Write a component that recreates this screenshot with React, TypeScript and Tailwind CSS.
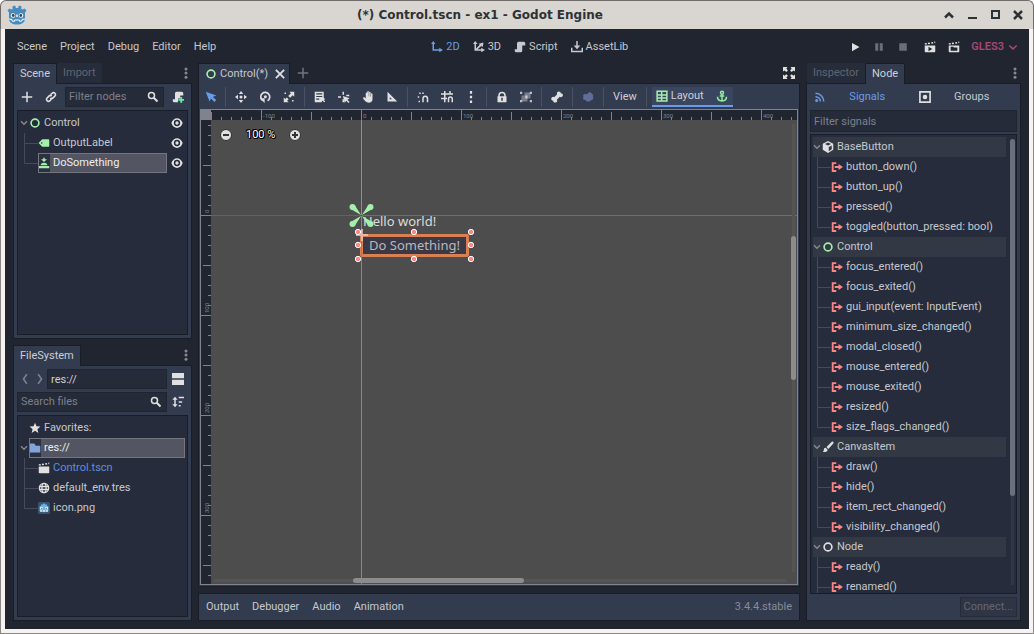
import { useState, type ReactNode } from "react";

const MENUS = ["Scene", "Project", "Debug", "Editor", "Help"];

const SIGNAL_GROUPS = [
  {
    name: "BaseButton",
    icon: "cube",
    signals: ["button_down()", "button_up()", "pressed()", "toggled(button_pressed: bool)"],
  },
  {
    name: "Control",
    icon: "ringGreen",
    signals: [
      "focus_entered()",
      "focus_exited()",
      "gui_input(event: InputEvent)",
      "minimum_size_changed()",
      "modal_closed()",
      "mouse_entered()",
      "mouse_exited()",
      "resized()",
      "size_flags_changed()",
    ],
  },
  {
    name: "CanvasItem",
    icon: "brush",
    signals: ["draw()", "hide()", "item_rect_changed()", "visibility_changed()"],
  },
  {
    name: "Node",
    icon: "ring",
    signals: ["ready()", "renamed()"],
    more: true,
  },
];

// All drawn on a 16x16 grid
const ICONS: Record<string, ReactNode> = {
  ring: <circle cx="8" cy="8" r="5.2" fill="none" stroke="currentColor" strokeWidth="2.2" />,
  ringGreen: <circle cx="8" cy="8" r="5.2" fill="none" stroke="#a5efac" strokeWidth="2.2" />,
  label: (
    <path
      fill="#a5efac"
      fillRule="evenodd"
      d="M6 3a1 1 0 0 0-.7.3l-4 4a1 1 0 0 0 0 1.4l4 4a1 1 0 0 0 .7.3h8a1 1 0 0 0 1-1V4a1 1 0 0 0-1-1zM5 7a1 1 0 0 1 0 2 1 1 0 0 1 0-2z"
    />
  ),
  button: (
    <path fill="#a5efac" d="M7 1h2v2h3L8 6.500 4 3h3zM3.500 11C3.500 8.500 6 7.500 8 7.500s4.500 1 4.500 3.500zM1 12h14v3H1z" />
  ),
  eye: (
    <path
      fillRule="evenodd"
      d="M8 1.500C5.200 1.500 1.700 3.600.6 7.700a1 1 0 0 0 0 .6C1.700 12.400 5.200 14.500 8 14.500s6.300-2.100 7.400-6.200a1 1 0 0 0 0-.6C14.300 3.600 10.800 1.500 8 1.500zm0 2.300a4.200 4.200 0 0 1 0 8.400 4.200 4.200 0 0 1 0-8.400zm0 2a2.200 2.200 0 0 0 0 4.400 2.200 2.200 0 0 0 0-4.400z"
    />
  ),
  plus: <path d="M7 1h2v6h6v2H9v6H7V9H1V7h6z" />,
  link: (
    <g fill="none" stroke="currentColor" strokeWidth="2.200">
      <path d="M7.500 5l2-2a2.500 2.500 0 0 1 3.700 3.700l-2.500 2.500a2.500 2.500 0 0 1-3.500 0" />
      <path d="M8.500 11l-2 2a2.500 2.500 0 0 1-3.700-3.700l2.500-2.500a2.500 2.500 0 0 1 3.500 0" />
    </g>
  ),
  search: (
    <g fill="none" stroke="currentColor">
      <circle cx="6" cy="6" r="4" strokeWidth="2" />
      <path d="M9 9l5 5" strokeWidth="2.500" />
    </g>
  ),
  script: <path d="M6 1a2 2 0 0 0-2 2v8H1v2a2 2 0 0 0 2 2h6a2 2 0 0 0 2-2V6h4V3a2 2 0 0 0-2-2z" />,
  scriptAdd: (
    <>
      <path d="M6 1a2 2 0 0 0-2 2v8H1v2a2 2 0 0 0 2 2h5v-5h3V6h4V3a2 2 0 0 0-2-2z" />
      <path fill="#60efa0" d="M11 8h2.500v2.500H16V13h-2.500v2.500H11V13H8.500v-2.500H11z" />
    </>
  ),
  star: <path d="M8 1l2 4.700 5.200.4-4 3.400 1.300 5L8 11.800l-4.500 2.700 1.300-5-4-3.400L6 5.700z" />,
  folder: <path fill="#84a3dc" d="M1 2h6l2 3h6v9H1z" />,
  clapper: (
    <>
      <path d="M1 6h14v8a1 1 0 0 1-1 1H2a1 1 0 0 1-1-1z" />
      <path d="M1 3l2.500-.4.500 2H1zM5 2.300l2.500-.4.600 2-2.600.5zM9.500 1.600l2.300-.4.600 2-2.400.4zM13.500 1l1.500-.2v2l-1 .2z" />
    </>
  ),
  playScene: (
    <>
      <path fillRule="evenodd" d="M1 6h14v8a1 1 0 0 1-1 1H2a1 1 0 0 1-1-1zm5 1.500v6l5-3z" />
      <path d="M1 3l2.500-.4.500 2H1zM5 2.300l2.500-.4.600 2-2.600.5zM9.500 1.600l2.300-.4.600 2-2.400.4zM13.500 1l1.500-.2v2l-1 .2z" />
    </>
  ),
  playCustom: (
    <>
      <path fillRule="evenodd" d="M1 6h14v8a1 1 0 0 1-1 1H2a1 1 0 0 1-1-1zm2.500 1.500v5.500h9V8.500H8l-1-1z" />
      <path d="M1 3l2.500-.4.500 2H1zM5 2.300l2.500-.4.600 2-2.600.5zM9.500 1.600l2.300-.4.600 2-2.400.4zM13.500 1l1.500-.2v2l-1 .2z" />
    </>
  ),
  globe: (
    <g fill="none" stroke="currentColor" strokeWidth="1.800">
      <circle cx="8" cy="8" r="6.200" />
      <ellipse cx="8" cy="8" rx="2.800" ry="6.200" />
      <path d="M2 6h12M2 10h12" />
    </g>
  ),
  godotSmall: (
    <>
      <rect width="16" height="16" rx="2" fill="#355570" />
      <path fill="#6fb0dd" d="M2 6l2-1V3l2 .5L7 2h2l1 1.500 2-.5v2l2 1v6c-2 2-10 2-12 0z" />
      <path fill="#fff" d="M3 6.500h3.500v3H3zM9.500 6.500H13v3H9.500zM3 11h2v2H3zM7 11h2v2H7zM11 11h2v2h-2z" />
      <path fill="#35608a" d="M4 7.500h2v1.500H4zM10 7.500h2v1.500h-2z" />
    </>
  ),
  split: <path d="M0 0h16v7H0zM0 9h16v7H0z" />,
  sort: (
    <path d="M4 1l3.500 4H5v6h2.500L4 15 .5 11H3V5H.5zM9 1h7v2H9zM9 7h4.500v2H9zM9 12h2.500v2H9z" />
  ),
  two: <path d="M3 0l3 4H4v7h7V9l5 3-5 3v-2H2V4H0z" />,
  three: <path d="M3 0l3 4H4v6l5-5-1.500-1.500L14 2l-1 6-2-1.500L6 11h5V9l5 3-5 3v-2H2V4H0z" />,
  asset: <path d="M7 0h2v6h3.500L8 11 3.500 6H7zM0 9h2v4h12V9h2v6H0z" />,
  play: <path d="M4 2.500v11L14 8z" />,
  pause: <path d="M3 3h4v10H3zM9 3h4v10H9z" />,
  stop: <path d="M3 3h10v10H3z" />,
  select: <path fill="#699ce8" d="M1 1l5 13 2-4 4.500 4.500L15 12l-4.500-4L15 6z" />,
  move: (
    <path d="M8 0l3 4H5zM8 16l3-4H5zM0 8l4-3v6zM16 8l-4-3v6zM8 6a2 2 0 0 0 0 4 2 2 0 0 0 0-4z" />
  ),
  rotate: (
    <>
      <path d="M4.500 12.500A6 6 0 1 1 11.500 13" fill="none" stroke="currentColor" strokeWidth="2.200" />
      <path d="M1 9.500h6.500V16z" />
      <circle cx="8.500" cy="7.500" r="2" />
    </>
  ),
  scale: (
    <path d="M8.500 1H15v6.500L13 5.500l-3.500 3.500-2.500-2.500L10.500 3zM7.500 15H1V8.500l2 2L5 8.500 7.500 11l-2 2zM2 2h2v2H2zM12 12h2v2h-2z" />
  ),
  list: (
    <path
      fillRule="evenodd"
      d="M1 1h12v8l2 2-2 1 2 2-1 1-3-2-1 2H1zM3 3v1.500h8V3zM3 6.500V8h8V6.500zM3 10v1.500h4V10z"
    />
  ),
  pivot: <path d="M6 1h2v4H6zM0 7h4v2H0zM6 11h2v4H6zM11 5h4v2h-4zM6.500 6.500l9 3-3 2 3 3-1.500 1.500-3-3-2 3z" />,
  hand: (
    <path d="M7 1a1 1 0 0 1 2 0v6h.5V2a1 1 0 0 1 2 0v5.500h.5V4a1 1 0 0 1 2 0v7c0 3-2 4.500-5 4.500-3.500 0-5-2-7.500-5.500C1 8.500 3 8 4 9l1 1V3a1 1 0 0 1 2 0z" />
  ),
  ruler: <path fillRule="evenodd" d="M2 1l13 13H2zm3 7v3h3z" />,
  magnet: (
    <path d="M3 2h2v2H3zM7 2h2v2H7zM1 7h2v2H1zM7 15v-5a4 4 0 0 1 8 0v5h-2v-5a2 2 0 0 0-4 0v5zM2 13h2v2H2z" />
  ),
  gridMagnet: (
    <path d="M4 0h2v3h5V0h2v3h3v2H6v4h2v2H6v4H4v-4H0V9h4V5H0V3h4zM9 15v-4.500a3.500 3.500 0 0 1 7 0V15h-2v-4.500a1.500 1.500 0 0 0-3 0V15z" />
  ),
  dots: <path d="M6.500 0h3v3.500h-3zM6.500 6.250h3v3.500h-3zM6.500 12.500h3V16h-3z" />,
  lock: (
    <path
      fillRule="evenodd"
      d="M8 1a5 5 0 0 0-5 5v1H2v8h12V7h-1V6a5 5 0 0 0-5-5zm0 2a3 3 0 0 1 3 3v1H5V6a3 3 0 0 1 3-3zM7 9h2v4H7z"
    />
  ),
  group: (
    <>
      <path opacity=".4" d="M6 2h8v8H6zM2 6h8v8H2z" />
      <path d="M0 1h3v3H0zM13 1h3v3h-3zM0 12h3v3H0zM13 12h3v3h-3zM7 6h3v4H7z" opacity=".8" />
    </>
  ),
  bone: (
    <path d="M10.500.5a2.600 2.600 0 0 0-2.300 3.700L4.300 8.200A2.600 2.600 0 1 0 2.900 13a2.600 2.600 0 1 0 4.900-1.400l3.900-3.900A2.600 2.600 0 1 0 13.100 3a2.600 2.600 0 0 0-2.600-2.500z" />
  ),
  blob: (
    <path
      fill="#5f6d98"
      d="M7 4.500a3.200 3.200 0 0 1 6-1c2 .5 2.500 2.500 1.500 3.500 1.500 2 0 5.500-2.500 5l-1 2H6l-1-2c-3.500.5-4.500-2-3-4-1.500-2 0-5 5-3.500z"
    />
  ),
  layout: (
    <path fill="none" stroke="#a5efac" strokeWidth="2" d="M1.500 1.500h13v13h-13zM1.500 6.500h13M1.500 10.500h13M7.500 2v12" />
  ),
  anchor: (
    <g fill="none" stroke="#8eef97" strokeWidth="2">
      <circle cx="8" cy="3.500" r="2" />
      <path d="M8 6v8M5 8h6M2 9c0 4 3 5.500 6 5.500s6-1.500 6-5.500" />
    </g>
  ),
  expand: (
    <path d="M0 0h6L4.500 2 6.500 4.500 4.500 6.500 2 4.500 0 6zM16 0h-6l1.500 2-2 2.500 2 2 2.500-2L16 6zM0 16h6l-1.500-2 2-2.500-2-2-2.500 2L0 10zM16 16h-6l1.500-2-2-2.500 2-2 2.500 2 2-1.500z" />
  ),
  close: <path d="M2.500 2.500l11 11M13.500 2.500l-11 11" stroke="currentColor" strokeWidth="2.500" />,
  signals: (
    <g fill="none" stroke="currentColor" strokeWidth="2">
      <path d="M2 3a11 11 0 0 1 11 11M2 7.500A6.500 6.500 0 0 1 8.500 14" />
      <circle cx="3.500" cy="12.500" r="1" />
    </g>
  ),
  groups: (
    <>
      <path fill="none" stroke="currentColor" strokeWidth="2.200" d="M1.200 1.200h13.600v13.600H1.200z" />
      <circle cx="8" cy="8" r="3" />
    </>
  ),
  cube: (
    <path fillRule="evenodd" d="M8 0l7 3.500v8L8 16l-7-4.500v-8zM8 2L4 4l4 2 4-2zM9 8v5.500l4-2.500V6z" />
  ),
  brush: (
    <path d="M15 1c-1-.6-2 0-3 1L6 8l2.500 2.500 6-6.500c1-1 1.200-2.400.5-3zM5 9c-2 0-2.500 1-2.500 2.500 0 1-.5 2-1.500 3 3 .5 6.500 0 6.500-3z" />
  ),
  signal: <path fill="#ff8484" d="M1 1.500h6V4H3.500v8H7v2.500H1zM5 6.800h5V4l6 4-6 4V9.200H5z" />,
  down: <path d="M3 6l5 4.500L13 6" fill="none" stroke="currentColor" strokeWidth="2" />,
  fold: <path d="M2 4.500l6 6 6-6" fill="none" stroke="currentColor" strokeWidth="2.800" />,
  left: <path d="M10.500 1.500L6 8l4.500 6.500" fill="none" stroke="currentColor" strokeWidth="2.200" />,
  right: <path d="M5.500 1.500L10 8l-4.500 6.500" fill="none" stroke="currentColor" strokeWidth="2.200" />,
  kebab: (
    <>
      <circle cx="8" cy="2.500" r="2" />
      <circle cx="8" cy="8" r="2" />
      <circle cx="8" cy="13.500" r="2" />
    </>
  ),
};

function Icon({ name, className = "size-3" }: { name: string; className?: string }) {
  return (
    <svg viewBox="0 0 16 16" fill="currentColor" aria-hidden="true" className={`shrink-0 ${className}`}>
      {ICONS[name]}
    </svg>
  );
}

function GodotLogo() {
  return (
    <svg viewBox="0 0 20 20" className="size-5" aria-hidden="true">
      <path
        fill="#478cbf"
        d="M8 .5l-2.600 1L5.700 4l-1.200.6-2-1.200L.5 5.500 2 7.500v6.200C2 17.500 5.500 19.500 10 19.500s8-2 8-5.800V7.500l1.500-2-2-2.100-2 1.200L14.300 4l.3-2.500L12 .5 11 3H9z"
      />
      <circle cx="6" cy="10.500" r="2.200" fill="#fff" />
      <circle cx="14" cy="10.500" r="2.200" fill="#fff" />
      <circle cx="6.200" cy="10.500" r="1.400" fill="#414042" />
      <circle cx="13.800" cy="10.500" r="1.400" fill="#414042" />
      <path d="M10 9.500v2.500" stroke="#fff" strokeWidth="1.400" />
      <path d="M2 14l3 .5V16l2.500.3V15h5v1.300l2.500-.3v-1.500l3-.5" fill="none" stroke="#fff" strokeWidth="1" />
    </svg>
  );
}

function TitleBar() {
  return (
    <header className="flex h-[29px] shrink-0 items-center rounded-t-md border border-b-0 border-[#6f6b69] bg-[#d9d5d1] pr-1 pl-1.5 text-[#2d3236]">
      <GodotLogo />
      <h1 className="flex-1 pr-1 text-center font-['DejaVu_Sans','Liberation_Sans',sans-serif] text-[12px] font-bold">
        (*) Control.tscn - ex1 - Godot Engine
      </h1>
      <div className="flex">
        <button aria-label="Shade" className="flex w-[23px] justify-center">
          <svg viewBox="0 0 12 12" className="size-3" fill="none" stroke="currentColor" strokeWidth="2.500">
            <path d="M2 8.500l4-4 4 4" />
          </svg>
        </button>
        <button aria-label="Minimize" className="flex w-[23px] justify-center">
          <svg viewBox="0 0 12 12" className="size-3" fill="currentColor">
            <path d="M2 8h9v2H2z" />
          </svg>
        </button>
        <button aria-label="Maximize" className="flex w-[23px] justify-center">
          <svg viewBox="0 0 12 12" className="size-3" fill="none" stroke="currentColor" strokeWidth="2">
            <path d="M3 2h7v7H3z" />
          </svg>
        </button>
        <button aria-label="Close" className="flex w-[23px] justify-center">
          <svg viewBox="0 0 12 12" className="size-3" fill="none" stroke="currentColor" strokeWidth="2.500">
            <path d="M2 2l8 8M10 2l-8 8" />
          </svg>
        </button>
      </div>
    </header>
  );
}

function MenuBar() {
  return (
    <div className="flex h-[34px] shrink-0 items-center justify-between pt-0.5 pr-0.5 pl-1">
      <nav className="flex gap-[13px]">
        {MENUS.map((m) => (
          <button key={m}>{m}</button>
        ))}
      </nav>
      <div className="flex gap-[13px]">
        <button className="flex items-center gap-[3px] text-[#699ce8]">
          <Icon name="two" />
          2D
        </button>
        <button className="flex items-center gap-[3px]">
          <Icon name="three" />
          3D
        </button>
        <button className="flex items-center gap-[3px]">
          <Icon name="script" />
          Script
        </button>
        <button className="flex items-center gap-[3px]">
          <Icon name="asset" />
          AssetLib
        </button>
      </div>
      <div className="flex items-center text-[#e0e0e0]">
        <button aria-label="Play" className="flex w-6 justify-center">
          <Icon name="play" />
        </button>
        <button aria-label="Pause" className="flex w-6 justify-center text-[#6b6e76]">
          <Icon name="pause" />
        </button>
        <button aria-label="Stop" className="flex w-6 justify-center text-[#6b6e76]">
          <Icon name="stop" />
        </button>
        <button aria-label="Play scene" className="flex w-[29px] justify-center">
          <Icon name="playScene" />
        </button>
        <button aria-label="Play custom scene" className="mr-[7px] flex w-5 justify-center">
          <Icon name="playCustom" />
        </button>
        <button className="flex items-center gap-[3px] font-semibold text-[#a5487a]">
          GLES3
          <Icon name="down" />
        </button>
      </div>
    </div>
  );
}

function Tab({ active, children }: { active?: boolean; children: ReactNode }) {
  return (
    <button
      className={
        active
          ? "relative z-10 flex h-[21px] items-center gap-[3px] border border-b-0 border-[#191d27] bg-[#333b4f] px-1.5 text-[#cdcfd2]"
          : "flex h-5 items-center bg-[#272c3a] px-1.5 text-[#5f6471]"
      }
    >
      {children}
    </button>
  );
}

function Kebab({ label }: { label: string }) {
  return (
    <button aria-label={label} className="ml-auto flex h-5 w-3 items-center justify-center text-[#868992]">
      <Icon name="kebab" />
    </button>
  );
}

// Connecting line between a parent row and its child
function Branch({ last }: { last?: boolean }) {
  return (
    <svg viewBox="0 0 14 20" className="h-5 w-3.5 shrink-0" fill="none" stroke="#454b5b" aria-hidden="true">
      <path d={last ? "M.5 0V10.500H14" : "M.5 0V20M.5 10.500H14"} />
    </svg>
  );
}

function NodeRow({ icon, name, selected, last }: { icon: string; name: string; selected?: boolean; last?: boolean }) {
  return (
    <li className="flex h-5 items-center pl-1.5">
      <Branch last={last} />
      <div
        className={
          selected
            ? "flex h-5 flex-1 items-center bg-[#535662] text-[#eeeeee] outline -outline-offset-1 outline-[#73767f]"
            : "flex h-5 flex-1 items-center"
        }
      >
        <span className={selected ? "flex h-5 items-center bg-[#2c3140]" : "flex"}>
          <Icon name={icon} />
        </span>
        <span className="pl-[3px]">{name}</span>
      </div>
      <button aria-label={`Toggle ${name}`} className="mr-px flex w-[19px] justify-center text-[#e0e0e0]">
        <Icon name="eye" />
      </button>
    </li>
  );
}

function FileRow({ icon, name, last, open }: { icon: string; name: string; last?: boolean; open?: boolean }) {
  return (
    <li className="flex h-5 items-center pl-1.5">
      <Branch last={last} />
      <Icon name={icon} className="size-3 text-[#e0e0e0]" />
      <span className={open ? "pl-[3px] text-[#5f8ddb]" : "pl-[3px]"}>{name}</span>
    </li>
  );
}

function SceneDock() {
  const [filter, setFilter] = useState("");
  return (
    <section className="flex min-h-0 flex-1 flex-col">
      <div className="flex h-5 shrink-0">
        <Tab active>Scene</Tab>
        <Tab>Import</Tab>
        <Kebab label="Scene dock options" />
      </div>
      <div className="flex min-h-0 flex-1 flex-col gap-[3px] border border-[#191d27] bg-[#333b4f] p-[3px]">
        <div className="flex h-5 shrink-0 items-center gap-1 text-[#e0e0e0]">
          <button aria-label="Add node" className="flex w-5 justify-center">
            <Icon name="plus" />
          </button>
          <button aria-label="Instance scene" className="flex w-5 justify-center">
            <Icon name="link" />
          </button>
          <div className="flex h-5 min-w-0 flex-1 items-center border border-[#202430] bg-[#262b39] pr-1 pl-[3px]">
            <input
              aria-label="Filter nodes"
              placeholder="Filter nodes"
              value={filter}
              onChange={(e) => setFilter(e.target.value)}
              className="min-w-0 flex-1 outline-none placeholder:text-[#7c808b]"
            />
            <Icon name="search" />
          </div>
          <button aria-label="Attach script" className="flex w-5 justify-center">
            <Icon name="scriptAdd" />
          </button>
        </div>
        <ul className="min-h-0 flex-1 overflow-hidden border border-[#191d27] bg-[#262c3b] pt-0.5">
          <li className="flex h-5 items-center">
            <Icon name="fold" className="mr-px ml-0.5 size-2 text-[#868992]" />
            <Icon name="ringGreen" />
            <span className="flex-1 pl-[3px]">Control</span>
            <button aria-label="Toggle Control" className="mr-px flex w-[19px] justify-center text-[#e0e0e0]">
              <Icon name="eye" />
            </button>
          </li>
          <NodeRow icon="label" name="OutputLabel" />
          <NodeRow icon="button" name="DoSomething" selected last />
        </ul>
      </div>
    </section>
  );
}

function FileSystemDock() {
  const [path, setPath] = useState("res://");
  const [search, setSearch] = useState("");
  return (
    <section className="flex min-h-0 flex-1 flex-col">
      <div className="flex h-5 shrink-0">
        <Tab active>FileSystem</Tab>
        <Kebab label="FileSystem dock options" />
      </div>
      <div className="flex min-h-0 flex-1 flex-col gap-[3px] border border-[#191d27] bg-[#333b4f] p-[3px]">
        <div className="flex h-5 shrink-0 items-center text-[#e0e0e0]">
          <button aria-label="Back" className="flex w-[15px] justify-center text-[#7d818c]">
            <Icon name="left" />
          </button>
          <button aria-label="Forward" className="flex w-[15px] justify-center text-[#7d818c]">
            <Icon name="right" />
          </button>
          <input
            aria-label="Path"
            value={path}
            onChange={(e) => setPath(e.target.value)}
            className="h-5 min-w-0 flex-1 border border-[#202430] bg-[#262b39] px-[3px] text-[#cdcfd2] outline-none"
          />
          <button aria-label="Toggle split mode" className="flex w-[21px] justify-center">
            <Icon name="split" />
          </button>
        </div>
        <div className="flex h-5 shrink-0 items-center text-[#e0e0e0]">
          <div className="flex h-5 min-w-0 flex-1 items-center border border-[#202430] bg-[#262b39] pr-1 pl-[3px]">
            <input
              aria-label="Search files"
              placeholder="Search files"
              value={search}
              onChange={(e) => setSearch(e.target.value)}
              className="min-w-0 flex-1 outline-none placeholder:text-[#7c808b]"
            />
            <Icon name="search" />
          </div>
          <button aria-label="Sort files" className="flex w-[21px] justify-center">
            <Icon name="sort" />
          </button>
        </div>
        <ul className="min-h-0 flex-1 overflow-hidden border border-[#191d27] bg-[#262c3b] pt-0.5">
          <li className="flex h-5 items-center pl-[11px]">
            <Icon name="star" className="size-3 text-[#e0e0e0]" />
            <span className="pl-[3px]">Favorites:</span>
          </li>
          <li className="flex h-5 items-center pr-0.5">
            <Icon name="fold" className="mr-px ml-0.5 size-2 text-[#868992]" />
            <div className="flex h-5 flex-1 items-center bg-[#535662] text-[#eeeeee] outline -outline-offset-1 outline-[#73767f]">
              <span className="flex h-5 items-center bg-[#2c3140]">
                <Icon name="folder" />
              </span>
              <span className="pl-[3px]">res://</span>
            </div>
          </li>
          <FileRow icon="clapper" name="Control.tscn" open />
          <FileRow icon="globe" name="default_env.tres" />
          <FileRow icon="godotSmall" name="icon.png" last />
        </ul>
      </div>
    </section>
  );
}

function Separator() {
  return <span className="mx-[3px] h-5 w-px bg-[#4a5162]" />;
}

function Tool({ icon, label }: { icon: string; label: string }) {
  return (
    <button aria-label={label} className="flex h-5 w-6 items-center justify-center">
      <Icon name={icon} />
    </button>
  );
}

function CanvasToolbar() {
  return (
    <div className="flex h-[25px] shrink-0 items-center text-[#e0e0e0]">
      <button aria-label="Select mode" className="flex h-5 w-[23px] items-center justify-center">
        <Icon name="select" />
      </button>
      <Separator />
      <Tool icon="move" label="Move mode" />
      <Tool icon="rotate" label="Rotate mode" />
      <Tool icon="scale" label="Scale mode" />
      <Separator />
      <Tool icon="list" label="List select" />
      <Tool icon="pivot" label="Change pivot" />
      <Tool icon="hand" label="Pan mode" />
      <Tool icon="ruler" label="Ruler mode" />
      <Separator />
      <Tool icon="magnet" label="Smart snap" />
      <Tool icon="gridMagnet" label="Grid snap" />
      <Tool icon="dots" label="Snapping options" />
      <Separator />
      <Tool icon="lock" label="Lock" />
      <Tool icon="group" label="Group" />
      <Separator />
      <Tool icon="bone" label="Skeleton options" />
      <Separator />
      <Tool icon="blob" label="Override camera" />
      <Separator />
      <button className="px-1.5 text-[#cdcfd2]">View</button>
      <Separator />
      <div className="ml-0.5 flex h-5 items-center border-b-2 border-[#699ce8] bg-[#3a4660] pr-[5px] pl-1 text-[#cdcfd2]">
        <button className="flex items-center gap-[3px]">
          <Icon name="layout" />
          Layout
        </button>
        <button aria-label="Anchor mode" className="ml-3">
          <Icon name="anchor" />
        </button>
      </div>
    </div>
  );
}

const TICKS = Array.from({ length: 240 }, (_, i) => (i - 15) * 10);
const TOP_LABELS = [-100, 0, 100, 200, 300, 400];
const SIDE_LABELS = [0, 100, 200, 300];

function tickStart(v: number) {
  if (v % 100 === 0) return 0;
  return v % 50 === 0 ? 2 : 7;
}

function TopRuler() {
  return (
    <svg className="h-2.5 w-full bg-[#21252f]" aria-hidden="true">
      {TICKS.map((v) => (
        <path key={v} d={`M${v + 150.5} ${tickStart(v)}V10`} stroke="#80838d" />
      ))}
      {TOP_LABELS.map((v) => (
        <text key={v} x={v + 152} y="8" fontSize="6" fill="#80838d">
          {v}
        </text>
      ))}
    </svg>
  );
}

function SideRuler() {
  return (
    <svg className="h-full w-2.5 bg-[#21252f]" aria-hidden="true">
      {TICKS.map((v) => (
        <path key={v} d={`M${tickStart(v)} ${v + 95.5}H10`} stroke="#80838d" />
      ))}
      {SIDE_LABELS.map((v) => (
        <text key={v} transform={`translate(8 ${v + 93}) rotate(-90)`} fontSize="6" fill="#80838d">
          {v}
        </text>
      ))}
    </svg>
  );
}

const HANDLES = [
  [147, 112],
  [203, 112],
  [260, 112],
  [147, 125],
  [260, 125],
  [147, 139],
  [203, 139],
  [260, 139],
];

function Viewport() {
  return (
    <div className="relative min-h-0 min-w-0 overflow-hidden bg-[#4d4d4d]">
      <span className="absolute top-[92px] left-[152px] font-['Noto_Sans','Open_Sans',sans-serif] text-[13px] leading-[18px] text-[#dcdcdc]">
        Hello world!
      </span>
      <button className="absolute top-[114px] left-[149px] h-[23px] w-[109px] rounded-[2px] border-[3px] border-[#d97f51] bg-[#3b3945] pb-px font-['Noto_Sans','Open_Sans',sans-serif] text-[13px] leading-[16px] text-[#b9b8bd]">
        Do Something!
      </button>

      {/* axes, anchors and resize handles */}
      <svg className="absolute inset-0 size-full" aria-hidden="true">
        <path d="M150.500 0V95" stroke="#79b312" />
        <path d="M150.500 96V2000" stroke="#71957a" />
        <path d="M0 95.500H150" stroke="#b63a54" />
        <path d="M151 95.500H4000" stroke="#9b4f9b" />
        <g fill="#a5efac">
          <path d="M150 95L140 89.300 144 85.500z" />
          <path d="M151 95L161 89.300 157 85.500z" />
          <path d="M150 96L140 101.700 144 105.500z" />
          <path d="M151 96L161 101.700 157 105.500z" />
          <circle cx="141.500" cy="87" r="3" />
          <circle cx="159.500" cy="87" r="3" />
          <circle cx="141.500" cy="104" r="3" />
          <circle cx="159.500" cy="104" r="3" />
        </g>
        <path d="M150 109h2v5h5v2h-5v5h-2v-5h-5v-2h5z" fill="#f0c4bc" opacity=".8" />
        {HANDLES.map(([x, y]) => (
          <circle key={`${x}-${y}`} cx={x} cy={y} r="2.700" fill="#ff8484" stroke="#fff" strokeWidth="1" />
        ))}
      </svg>

      <div className="absolute top-[7px] left-2 flex items-center gap-[13px] text-[#e0e0e0]">
        <button aria-label="Zoom out">
          <svg viewBox="0 0 14 14" className="size-3.5">
            <circle cx="7" cy="7" r="5.500" fill="#e0e0e0" stroke="#333" />
            <path d="M4 7h6" stroke="#333" strokeWidth="2" />
          </svg>
        </button>
        <button className="text-white [text-shadow:1px_0_#000,-1px_0_#000,0_1px_#000,0_-1px_#000,1px_1px_#000,-1px_-1px_#000]">
          100 %
        </button>
        <button aria-label="Zoom in">
          <svg viewBox="0 0 14 14" className="size-3.5">
            <circle cx="7" cy="7" r="5.500" fill="#e0e0e0" stroke="#333" />
            <path d="M4 7h6M7 4v6" stroke="#333" strokeWidth="2" />
          </svg>
        </button>
      </div>

      <div className="absolute top-1 right-0.5 bottom-3 w-[3px] bg-[#555555]" />
      <div className="absolute top-[116px] right-px h-36 w-[5px] rounded-full bg-[#8c8c8c]" />
      <div className="absolute right-[11px] bottom-0.5 left-[3px] h-[3px] bg-[#555555]" />
      <div className="absolute bottom-px left-[142px] h-[5px] w-[171px] rounded-full bg-[#8c8c8c]" />
    </div>
  );
}

function Workspace() {
  return (
    <main className="flex min-w-0 flex-1 flex-col">
      <div className="flex h-5 shrink-0 items-center">
        <div className="relative z-10 flex h-[21px] items-center self-start border border-b-0 border-[#191d27] bg-[#333b4f] pr-[3px] pl-1.5">
          <button className="flex items-center gap-[3px]">
            <Icon name="ringGreen" />
            Control(*)
          </button>
          <button aria-label="Close tab" className="ml-1.5 text-[#e0e0e0]">
            <Icon name="close" />
          </button>
        </div>
        <button aria-label="New scene" className="ml-[7px] text-[#6f737d]">
          <Icon name="plus" />
        </button>
        <button aria-label="Distraction free mode" className="mr-[5px] ml-auto text-[#e0e0e0]">
          <Icon name="expand" />
        </button>
      </div>
      <div className="flex min-h-0 flex-1 flex-col border border-[#191d27] bg-[#333b4f]">
        <CanvasToolbar />
        <div className="mx-px mb-px grid min-h-0 flex-1 grid-cols-[10px_minmax(0,1fr)] grid-rows-[10px_minmax(0,1fr)] border border-[#80838d]">
          <div className="bg-[#80838d]" />
          <TopRuler />
          <SideRuler />
          <Viewport />
        </div>
      </div>
      <div className="mt-1.5 flex h-7 shrink-0 items-center gap-[13px] border border-[#191d27] bg-[#333b4f] px-[7px]">
        <button>Output</button>
        <button>Debugger</button>
        <button>Audio</button>
        <button>Animation</button>
        <span className="ml-auto text-[#868c98]">3.4.4.stable</span>
      </div>
    </main>
  );
}

function NodeDock() {
  const [filter, setFilter] = useState("");
  return (
    <aside className="flex w-[215px] shrink-0 flex-col">
      <div className="flex h-5 shrink-0 pl-px">
        <Tab>Inspector</Tab>
        <Tab active>Node</Tab>
        <Kebab label="Node dock options" />
      </div>
      <div className="flex min-h-0 flex-1 flex-col border border-[#191d27] bg-[#333b4f] px-[3px] pb-[3px]">
        <div className="flex h-[26px] shrink-0 items-center">
          <button className="flex flex-1 items-center pl-1 text-[#699ce8]">
            <Icon name="signals" />
            <span className="flex-1 pr-1">Signals</span>
          </button>
          <button className="flex flex-1 items-center pl-1.5">
            <Icon name="groups" className="size-3 text-[#e0e0e0]" />
            <span className="flex-1 pr-1">Groups</span>
          </button>
        </div>
        <input
          aria-label="Filter signals"
          placeholder="Filter signals"
          value={filter}
          onChange={(e) => setFilter(e.target.value)}
          className="h-[22px] shrink-0 border border-[#202430] bg-[#262b39] px-[3px] outline-none placeholder:text-[#7c808b]"
        />
        <div className="mt-0.5 flex min-h-0 flex-1 overflow-hidden border border-[#191d27] bg-[#262c3b]">
          <ul className="min-w-0 flex-1 pt-0.5 pl-0.5">
            {SIGNAL_GROUPS.map((group) => (
              <li key={group.name}>
                <div className="flex h-5 items-center bg-[#333845]">
                  <Icon name="fold" className="mr-px size-2 text-[#868992]" />
                  <Icon name={group.icon} className="size-3 text-[#e0e0e0]" />
                  <span className="pl-[3px]">{group.name}</span>
                </div>
                <ul>
                  {group.signals.map((s, i) => (
                    <li key={s} className="flex h-5 items-center pl-1">
                      <Branch last={!group.more && i === group.signals.length - 1} />
                      <Icon name="signal" />
                      <span className="pl-[3px] whitespace-nowrap">{s}</span>
                    </li>
                  ))}
                </ul>
              </li>
            ))}
          </ul>
          <div className="mr-px ml-1 flex w-[5px] justify-center pt-1 pb-2">
            <div className="h-full w-[3px] bg-[#303645]">
              <div className="ml-[-1px] h-4/5 w-[5px] rounded-full bg-[#6b6f7b]" />
            </div>
          </div>
        </div>
        <button
          disabled
          className="mt-[3px] h-5 shrink-0 self-end border border-[#262b38] bg-[#2f3545] px-[3px] leading-[18px] text-[#636875]"
        >
          Connect...
        </button>
      </div>
    </aside>
  );
}

export default function App() {
  return (
    <div className="flex h-screen flex-col bg-white font-['Roboto','Noto_Sans',sans-serif] text-[11px] leading-4 text-[#c6c8cd]">
      <TitleBar />
      <div className="flex min-h-0 flex-1 flex-col border border-t-0 border-[#8a8684] bg-[#f6f3f0] px-1 pb-1">
        <div className="flex min-h-0 flex-1 flex-col bg-[#21252f] px-2 pb-2">
          <MenuBar />
          <div className="flex min-h-0 flex-1 gap-1.5">
            <aside className="flex w-[179px] shrink-0 flex-col gap-1.5">
              <SceneDock />
              <FileSystemDock />
            </aside>
            <Workspace />
            <NodeDock />
          </div>
        </div>
      </div>
    </div>
  );
}
